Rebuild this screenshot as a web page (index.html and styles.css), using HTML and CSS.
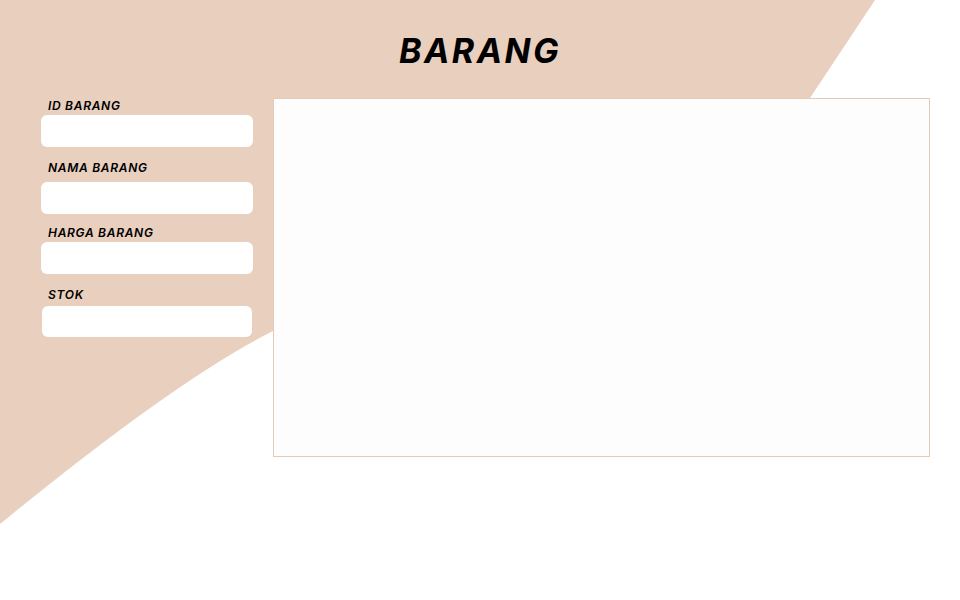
FILE: index.html
```html
<!DOCTYPE html>
<html lang="id">
<head>
    <meta charset="UTF-8">
    <meta name="viewport" content="width=device-width, initial-scale=1.0">
    <title>Barang</title>
    <link rel="stylesheet" href="styles.css">
</head>
<body>
    <svg class="bg-shape" width="960" height="600" viewBox="0 0 960 600">
        <path d="M0 0 H875 L810 98 L273 331 Q177 379 0 524 Z"></path>
    </svg>

    <div class="page">
        <header class="header">
            <h1 class="title">BARANG</h1>
        </header>

        <main class="content">
            <form class="barang-form">
                <div class="field">
                    <label for="idBarang">ID BARANG</label>
                    <input type="text" id="idBarang">
                </div>
                <div class="field field-name">
                    <label for="namaBarang">NAMA BARANG</label>
                    <input type="text" id="namaBarang">
                </div>
                <div class="field">
                    <label for="hargaBarang">HARGA BARANG</label>
                    <input type="text" id="hargaBarang">
                </div>
                <div class="field field-stok">
                    <label for="stok">STOK</label>
                    <input type="text" id="stok">
                </div>
            </form>

            <div class="table-box"></div>
        </main>
    </div>
</body>
</html>
```

FILE: styles.css
```css
body {
    margin: 0;
    font-family: 'Inter', 'Liberation Sans', sans-serif;
    background-color: #ffffff;
    color: #000;
    width: 960px;
    height: 600px;
    overflow: hidden;
    position: relative;
}

.bg-shape {
    position: absolute;
    top: 0;
    left: 0;
}

.bg-shape path {
    fill: #e8cfbe;
}

.page {
    position: relative;
}

.header {
    height: 98px;
    box-sizing: border-box;
    padding-top: 31px;
    text-align: center;
}

.title {
    margin: 0;
    font-size: 34px;
    line-height: 40px;
    font-weight: 700;
    font-style: italic;
    letter-spacing: 2.5px;
}

.content {
    display: flex;
    gap: 20px;
    padding-left: 41px;
}

.barang-form {
    width: 212px;
    padding-top: 1px;
}

.field {
    display: flex;
    flex-direction: column;
    margin-bottom: 14px;
}

.field label {
    font-size: 12px;
    line-height: 14px;
    font-weight: 600;
    font-style: italic;
    letter-spacing: 0.7px;
    margin: 0 0 2px 7px;
}

.field input {
    height: 32px;
    box-sizing: border-box;
    border: none;
    border-radius: 6px;
    background-color: #fff;
    outline: none;
}

.field-name label {
    margin-bottom: 7px;
}

.field-name {
    margin-bottom: 12px;
}

.field-stok input {
    height: 31px;
    margin: 2px 1px 0;
}

.table-box {
    width: 657px;
    height: 359px;
    box-sizing: border-box;
    border: 1px solid #e6cab8;
    background-color: #fdfdfd;
}
```
